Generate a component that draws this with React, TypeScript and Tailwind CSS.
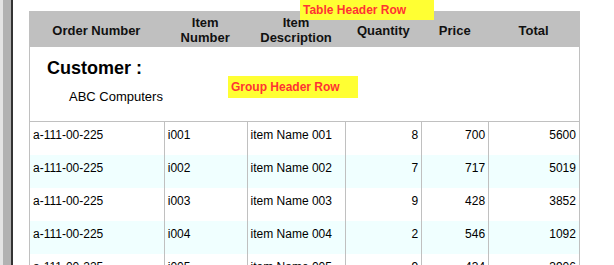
import React from 'react';

const cols = [
  { key: 'order', label: ['Order Number'], w: 'w-[135px]', align: 'text-left' },
  { key: 'item', label: ['Item', 'Number'], w: 'w-[83px]', align: 'text-left' },
  { key: 'desc', label: ['Item', 'Description'], w: 'w-[99px]', align: 'text-left' },
  { key: 'qty', label: ['Quantity'], w: 'w-[76px]', align: 'text-right' },
  { key: 'price', label: ['Price'], w: 'w-[67px]', align: 'text-right' },
  { key: 'total', label: ['Total'], w: 'w-[91px]', align: 'text-right' },
];

const rows = [
  ['a-111-00-225', 'i001', 'item Name 001', '8', '700', '5600'],
  ['a-111-00-225', 'i002', 'item Name 002', '7', '717', '5019'],
  ['a-111-00-225', 'i003', 'item Name 003', '9', '428', '3852'],
  ['a-111-00-225', 'i004', 'item Name 004', '2', '546', '1092'],
  ['a-111-00-225', 'i005', 'item Name 005', '9', '434', '3906'],
];

const Label: React.FC<{ text: string; className: string }> = ({ text, className }) => (
  <div
    className={`absolute bg-[#ffff33] text-[#ff3333] font-bold text-[12px] leading-none pl-[3px] pt-[4px] ${className}`}
  >
    {text}
  </div>
);

export default function App() {
  return (
    <div className="relative w-[614px] h-[265px] overflow-hidden bg-white flex font-['Liberation_Sans',Arial,sans-serif] text-black">
      {/* viewer frame on the left */}
      <div className="w-[3px] bg-[#e4e4e4]" />
      <div className="w-[8px] bg-[#b2b2b2]" />
      <div className="w-[2px] bg-[#333333]" />

      <div className="pl-[16px] pt-[11px]">
        <div className="w-[551px] border-r border-[#c0c0c0]">
          {/* table header */}
          <div className="flex h-[36px] bg-[#c0c0c0] text-[13px] font-bold leading-[15px] text-[#111]">
            {cols.map((c) => (
              <div key={c.key} className={`${c.w} flex flex-col items-center justify-center text-center pt-[2px]`}>
                {c.label.map((l) => (
                  <span key={l}>{l}</span>
                ))}
              </div>
            ))}
          </div>

          {/* group header */}
          <div className="h-[75px] border-l border-b border-[#c0c0c0] pl-[17px] pt-[10px]">
            <div className="text-[18px] font-bold leading-[22px]">Customer :</div>
            <div className="text-[13px] leading-[16px] pl-[22px] pt-[10px]">ABC Computers</div>
          </div>

          {/* detail rows */}
          {rows.map((r, i) => (
            <div key={i} className={`flex h-[33px] text-[12px] leading-[14px] ${i % 2 === 1 ? 'bg-[#f0ffff]' : 'bg-white'}`}>
              {r.map((v, j) => (
                <div
                  key={j}
                  className={`${cols[j].w} ${cols[j].align} border-l border-[#c0c0c0] px-[3px] pt-[6px]`}
                >
                  {v}
                </div>
              ))}
            </div>
          ))}
        </div>
      </div>

      <Label text="Table Header Row" className="left-[300px] top-0 w-[134px] h-[20px]" />
      <Label text="Group Header Row" className="left-[228px] top-[76px] w-[130px] h-[22px] pt-[5px]" />
    </div>
  );
}
